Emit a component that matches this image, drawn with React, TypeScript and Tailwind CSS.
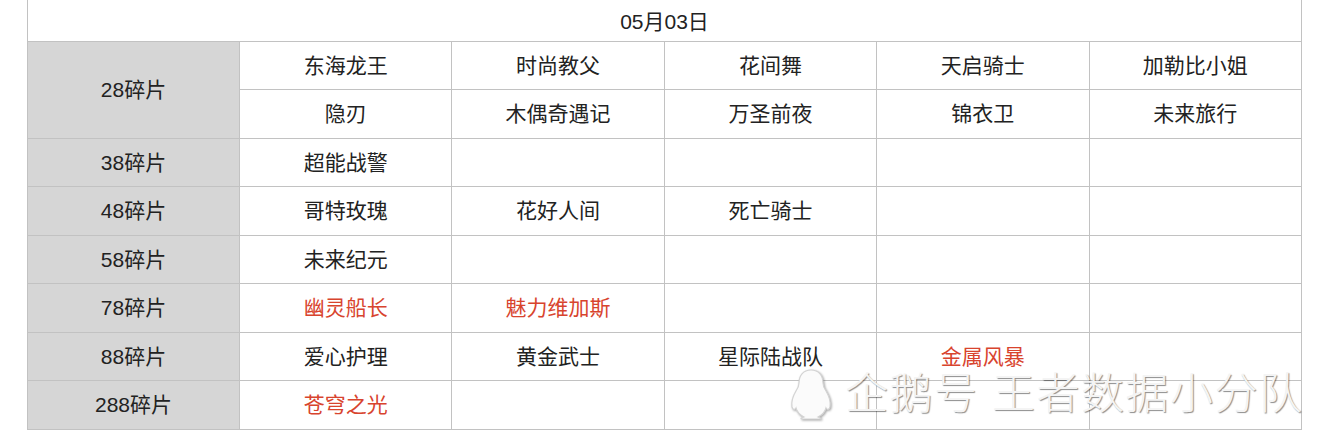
import React from 'react';

type Cell = { name: string; red?: boolean };

const rows: { label: string; lines: Cell[][] }[] = [
    {
        label: '28碎片',
        lines: [
            [{ name: '东海龙王' }, { name: '时尚教父' }, { name: '花间舞' }, { name: '天启骑士' }, { name: '加勒比小姐' }],
            [{ name: '隐刃' }, { name: '木偶奇遇记' }, { name: '万圣前夜' }, { name: '锦衣卫' }, { name: '未来旅行' }],
        ],
    },
    { label: '38碎片', lines: [[{ name: '超能战警' }, { name: '' }, { name: '' }, { name: '' }, { name: '' }]] },
    { label: '48碎片', lines: [[{ name: '哥特玫瑰' }, { name: '花好人间' }, { name: '死亡骑士' }, { name: '' }, { name: '' }]] },
    { label: '58碎片', lines: [[{ name: '未来纪元' }, { name: '' }, { name: '' }, { name: '' }, { name: '' }]] },
    { label: '78碎片', lines: [[{ name: '幽灵船长', red: true }, { name: '魅力维加斯', red: true }, { name: '' }, { name: '' }, { name: '' }]] },
    { label: '88碎片', lines: [[{ name: '爱心护理' }, { name: '黄金武士' }, { name: '星际陆战队' }, { name: '金属风暴', red: true }, { name: '' }]] },
    { label: '288碎片', lines: [[{ name: '苍穹之光', red: true }, { name: '' }, { name: '' }, { name: '' }, { name: '' }]] },
];

function Penguin() {
    return (
        <svg width="48" height="54" viewBox="0 0 48 54" className="drop-shadow-[1px_1px_1px_rgba(0,0,0,0.35)]">
            <path
                d="M24 3c-8 0-12 6-12 13 0 3-1 5-3 8-3 5-5 10-4 16 1 3 3 3 4 1 1 4 4 7 8 9-3 1-4 2-2 2h18c2 0 1-1-2-2 4-2 7-5 8-9 1 2 3 2 4-1 1-6-1-11-4-16-2-3-3-5-3-8 0-7-4-13-12-13z"
                fill="#fbfbfb"
                stroke="#d4d4d4"
                strokeWidth="1.2"
            />
        </svg>
    );
}

export default function App() {
    return (
        <div className="relative w-[1334px] h-[438px] bg-white overflow-hidden" style={{ fontFamily: '"Liberation Sans", "Noto Sans CJK SC", sans-serif' }}>
            <table className="ml-[27px] w-[1275px] table-fixed border-collapse text-[21px] text-[#222]">
                <colgroup>
                    <col className="w-[212px]" />
                    <col />
                    <col />
                    <col />
                    <col />
                    <col />
                </colgroup>
                <tbody>
                    <tr className="h-[41px]">
                        <td colSpan={6} className="border-x border-b border-[#c2c2c2] text-center align-middle pt-[2px]">
                            05月03日
                        </td>
                    </tr>
                    {rows.map((row) =>
                        row.lines.map((line, li) => (
                            <tr key={row.label + li} className="h-[48.5px]">
                                {li === 0 && (
                                    <td rowSpan={row.lines.length} className="border border-[#c2c2c2] bg-[#d6d6d6] text-center align-middle">
                                        {row.label}
                                    </td>
                                )}
                                {line.map((c, ci) => (
                                    <td
                                        key={ci}
                                        className={`border border-[#c2c2c2] text-center align-middle ${c.red ? 'text-[#d8442e]' : ''}`}
                                    >
                                        {c.name}
                                    </td>
                                ))}
                            </tr>
                        ))
                    )}
                </tbody>
            </table>

            {/* watermark */}
            <div className="absolute left-[787px] top-[367px] flex items-center gap-[10px] pointer-events-none">
                <Penguin />
                <span className="text-[43px] font-light leading-none tracking-[1.5px] text-[#f4f4f4] [text-shadow:1px_1px_1px_rgba(0,0,0,0.45)] whitespace-pre">
                    企鹅号 王者数据小分队
                </span>
            </div>
        </div>
    );
}
